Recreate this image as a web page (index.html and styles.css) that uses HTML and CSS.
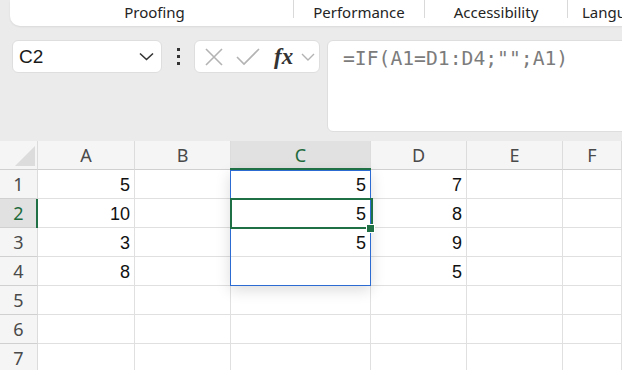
FILE: index.html
```html
<!DOCTYPE html>
<html lang="en">
<head>
  <meta charset="UTF-8" />
  <meta name="viewport" content="width=device-width, initial-scale=1" />
  <title>Planilha</title>
  <link rel="stylesheet" href="styles.css">
</head>
<body>
  <div class="ribbon">
    <div class="tab tab-first">Proofing</div>
    <div class="sep"></div>
    <div class="tab tab-perf">Performance</div>
    <div class="sep"></div>
    <div class="tab tab-acc">Accessibility</div>
    <div class="sep"></div>
    <div class="tab tab-lang">Language</div>
  </div>

  <div class="formula-row">
    <div class="name-box">
      <span>C2</span>
      <svg class="chev" width="15" height="9" viewBox="0 0 15 9"><path d="M1 1.5 L7.5 7.5 L14 1.5" fill="none" stroke="#333" stroke-width="1.6"/></svg>
    </div>
    <div class="dots"><i></i><i></i><i></i></div>
    <div class="func-box">
      <svg width="20" height="20" viewBox="0 0 20 20"><path d="M2 2 L18 18 M18 2 L2 18" stroke="#b3b3b3" stroke-width="1.6"/></svg>
      <svg width="24" height="20" viewBox="0 0 24 20"><path d="M1 10 L8 17 L23 2" fill="none" stroke="#b3b3b3" stroke-width="1.6"/></svg>
      <span class="fx">fx</span>
      <svg width="14" height="8" viewBox="0 0 14 8"><path d="M1 1 L7 7 L13 1" fill="none" stroke="#b3b3b3" stroke-width="1.4"/></svg>
    </div>
    <div class="formula-bar">=IF(A1=D1:D4;"";A1)</div>
  </div>

  <div class="sheet">
    <div class="hd corner">
      <svg width="38" height="29" viewBox="0 0 38 29"><polygon points="15,25 35,25 35,5" fill="#dcdcdc"/></svg>
    </div>
    <div class="hd">A</div>
    <div class="hd">B</div>
    <div class="hd hd-active">C</div>
    <div class="hd">D</div>
    <div class="hd">E</div>
    <div class="hd">F</div>

    <div class="rh">1</div>
    <div class="cell">5</div><div class="cell"></div><div class="cell">5</div><div class="cell">7</div><div class="cell"></div><div class="cell"></div>

    <div class="rh rh-active">2</div>
    <div class="cell">10</div><div class="cell"></div><div class="cell">5</div><div class="cell">8</div><div class="cell"></div><div class="cell"></div>

    <div class="rh">3</div>
    <div class="cell">3</div><div class="cell"></div><div class="cell">5</div><div class="cell">9</div><div class="cell"></div><div class="cell"></div>

    <div class="rh">4</div>
    <div class="cell">8</div><div class="cell"></div><div class="cell"></div><div class="cell">5</div><div class="cell"></div><div class="cell"></div>

    <div class="rh">5</div>
    <div class="cell"></div><div class="cell"></div><div class="cell"></div><div class="cell"></div><div class="cell"></div><div class="cell"></div>

    <div class="rh">6</div>
    <div class="cell"></div><div class="cell"></div><div class="cell"></div><div class="cell"></div><div class="cell"></div><div class="cell"></div>

    <div class="rh">7</div>
    <div class="cell"></div><div class="cell"></div><div class="cell"></div><div class="cell"></div><div class="cell"></div><div class="cell"></div>

    <!-- selecao sobre a grade -->
    <div class="sel-range"></div>
    <div class="col-mark"></div>
    <div class="row-mark"></div>
    <div class="sel-cell"></div>
    <div class="handle"></div>
  </div>
</body>
</html>
```

FILE: styles.css
```css
body {
  margin: 0;
  background: #ebebeb;
  font-family: "Noto Sans", sans-serif;
  color: #242424;
  width: 622px;
  height: 370px;
  overflow: hidden;
}

.ribbon {
  margin-left: 10px;
  height: 26px;
  background: #fff;
  border-bottom-left-radius: 10px;
  box-shadow: 0 1px 2px rgba(0, 0, 0, 0.08);
  display: flex;
  align-items: flex-start;
  overflow: hidden;
  white-space: nowrap;
}

.tab {
  flex-shrink: 0;
  height: 26px;
  line-height: 25px;
  font-size: 15px;
  text-align: center;
}

.tab-first { width: 283px; padding-left: 6px; box-sizing: border-box; }
.tab-perf { width: 130px; }
.tab-acc { width: 142px; }
.tab-lang { padding-left: 14px; }

.sep {
  flex-shrink: 0;
  width: 1px;
  height: 18px;
  background: #d9d9d9;
}

.formula-row {
  display: flex;
  align-items: flex-start;
  margin-top: 14px;
  padding-left: 12px;
}

.name-box {
  width: 150px;
  height: 33px;
  box-sizing: border-box;
  background: #fff;
  border: 1px solid #dedede;
  border-radius: 6px;
  display: flex;
  align-items: center;
  justify-content: space-between;
  padding: 0 7px 0 6px;
  font-family: "Liberation Sans", sans-serif;
  font-size: 19px;
  color: #1a1a1a;
}

.dots {
  width: 32px;
  height: 33px;
  display: flex;
  flex-direction: column;
  align-items: center;
  justify-content: center;
  gap: 4px;
}

.dots i {
  width: 3px;
  height: 3px;
  background: #333;
}

.func-box {
  width: 126px;
  height: 33px;
  box-sizing: border-box;
  background: #fff;
  border: 1px solid #dedede;
  border-radius: 6px;
  display: flex;
  align-items: center;
  gap: 12px;
  padding-left: 9px;
}

.fx {
  font-family: "Liberation Serif", serif;
  font-style: italic;
  font-weight: bold;
  font-size: 23px;
  color: #333;
  margin-left: 2px;
  margin-right: -4px;
  line-height: 1;
}

.formula-bar {
  flex: 1;
  margin-left: 7px;
  margin-right: -10px;
  height: 92px;
  box-sizing: border-box;
  background: #fff;
  border: 1px solid #dedede;
  border-radius: 6px;
  padding: 6px 0 0 15px;
  font-family: "DejaVu Sans Mono", monospace;
  font-size: 19.7px;
  line-height: 24px;
  color: #7c7c7c;
}

.sheet {
  position: relative;
  margin-top: 9px;
  display: grid;
  grid-template-columns: 38px 97px 96px 140px 96px 96px 1fr;
  grid-auto-rows: 29px;
  background: #fff;
}

.hd, .rh {
  background: #f5f5f5;
  border-right: 1px solid #dcdcdc;
  border-bottom: 1px solid #d0d0d0;
  font-size: 18px;
  color: #4a4a4a;
  display: flex;
  align-items: center;
  justify-content: center;
  box-sizing: border-box;
}

.corner { padding: 0; display: block; }
.corner svg { display: block; }

.hd-active, .rh-active {
  background: #e1e1e1;
  color: #1e6b3d;
}

.cell {
  border-right: 1px solid #e0e0e0;
  border-bottom: 1px solid #e0e0e0;
  box-sizing: border-box;
  font-family: "Liberation Sans", sans-serif;
  font-size: 18px;
  color: #111;
  text-align: right;
  padding: 3px 4px 0 0;
  line-height: 24px;
}

.sel-range {
  position: absolute;
  left: 230px;
  top: 29px;
  width: 141px;
  height: 116px;
  box-sizing: border-box;
  border: 1px solid #2c6bd2;
  box-shadow: 0 4px 14px rgba(0, 0, 0, 0.14);
}

.col-mark {
  position: absolute;
  left: 230px;
  top: 27px;
  width: 141px;
  height: 2px;
  background: #1f7145;
}

.row-mark {
  position: absolute;
  left: 36px;
  top: 58px;
  width: 2px;
  height: 29px;
  background: #1f7145;
}

.sel-cell {
  position: absolute;
  left: 230px;
  top: 57px;
  width: 143px;
  height: 31px;
  box-sizing: border-box;
  border: 2px solid #1f7145;
}

.handle {
  position: absolute;
  left: 367px;
  top: 84px;
  width: 7px;
  height: 7px;
  background: #1f7145;
  box-shadow: 0 0 0 1px #fff;
}
```
